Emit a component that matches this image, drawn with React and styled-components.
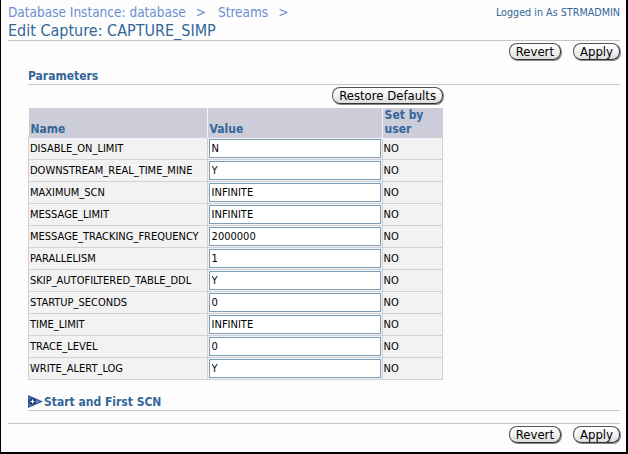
import React from "react";
import styled, { createGlobalStyle } from "styled-components";

const Global = createGlobalStyle`
  html, body { margin: 0; padding: 0; background: #ffffff; }
  body { font-family: "DejaVu Sans", "Liberation Sans", sans-serif; }
  * { box-sizing: border-box; }
`;

const Frame = styled.div`
  width: 628px;
  height: 454px;
  border-left: 1px solid #000;
  border-right: 2px solid #000;
  border-bottom: 2px solid #000;
  background: #fdfdfd;
  padding: 0 6px 0 7px;
  display: flex;
  flex-direction: column;
  font-family: "DejaVu Sans", "Liberation Sans", sans-serif;
  font-stretch: condensed;
`;

const TopRow = styled.div`
  display: flex;
  justify-content: space-between;
  align-items: flex-start;
  height: 22px;
  padding-top: 4px;
`;

const Breadcrumb = styled.div`
  font-size: 13.5px;
  color: #6b8ed1;
  display: flex;
  span.sep { margin: 0 12px 0 10px; }
`;

const Logged = styled.div`
  font-size: 10.7px;
  color: #336699;
  padding-top: 2px;
`;

const Title = styled.h1`
  margin: 0;
  font-size: 16px;
  font-weight: normal;
  color: #336699;
  height: 18px;
  line-height: 18px;
`;

const Divider = styled.div`
  height: 1px;
  background: #c4c4d0;
  margin: ${(p) => p.$m || "0"};
`;

const ButtonBar = styled.div`
  display: flex;
  justify-content: flex-end;
  gap: 12px;
  padding: ${(p) => p.$pad || "2px 0 0 0"};
`;

const PillButton = styled.button`
  font-family: inherit;
  font-stretch: condensed;
  font-size: 13px;
  color: #000;
  height: 17px;
  padding: 0 6px;
  border: 1px solid #555;
  border-right-color: #333;
  border-bottom-color: #333;
  border-radius: 8px;
  background: linear-gradient(#ffffff, #eeeeee 60%, #dcdcdc);
  box-shadow: 1px 1px 0 #888;
  line-height: 15px;
  cursor: pointer;
`;

const Section = styled.div`
  padding-left: 20px;
`;

const SectionHeader = styled.div`
  font-size: 12px;
  font-weight: bold;
  color: #336699;
  border-bottom: 1px solid #c4c4d0;
  height: ${(p) => p.$h || "18px"};
  display: flex;
  align-items: flex-end;
  padding-bottom: 1px;
  gap: 1px;
`;

const TableBox = styled.div`
  width: 415px;
  display: flex;
  flex-direction: column;
`;

const RestoreRow = styled.div`
  display: flex;
  justify-content: flex-end;
  padding: 2px 0 4px 0;
`;

const Table = styled.table`
  border-collapse: collapse;
  width: 415px;
  font-size: 11px;
`;

const Th = styled.th`
  background: #cdcdd9;
  color: #336699;
  font-weight: bold;
  font-size: 12px;
  text-align: left;
  vertical-align: bottom;
  padding: 0 2px 1px 2px;
  height: 29px;
  width: ${(p) => p.$w};
  border-right: 1px solid #f4f4f4;
  line-height: 14px;
  &:last-child { border-right: none; }
`;

const Td = styled.td`
  background: #f2f2f2;
  border: 1px solid #cfd0da;
  padding: 0 1px;
  height: 22px;
  color: #000;
  white-space: nowrap;
`;

const ValueInput = styled.input`
  font-family: inherit;
  font-stretch: condensed;
  font-size: 11px;
  width: 172px;
  height: 19px;
  border: 1px solid #7f9db9;
  background: #fff;
  padding: 0 2px;
  margin: 0;
  display: block;
`;

const Disclosure = styled.svg`
  display: block;
  margin-bottom: 1px;
`;

const params = [
  ["DISABLE_ON_LIMIT", "N"],
  ["DOWNSTREAM_REAL_TIME_MINE", "Y"],
  ["MAXIMUM_SCN", "INFINITE"],
  ["MESSAGE_LIMIT", "INFINITE"],
  ["MESSAGE_TRACKING_FREQUENCY", "2000000"],
  ["PARALLELISM", "1"],
  ["SKIP_AUTOFILTERED_TABLE_DDL", "Y"],
  ["STARTUP_SECONDS", "0"],
  ["TIME_LIMIT", "INFINITE"],
  ["TRACE_LEVEL", "0"],
  ["WRITE_ALERT_LOG", "Y"],
];

export default function App() {
  return (
    <>
      <Global />
      <Frame>
        <TopRow>
          <Breadcrumb>
            <span>Database Instance: database</span>
            <span className="sep">&gt;</span>
            <span>Streams</span>
            <span className="sep">&gt;</span>
          </Breadcrumb>
          <Logged>Logged in As STRMADMIN</Logged>
        </TopRow>
        <Title>Edit Capture: CAPTURE_SIMP</Title>
        <Divider />
        <ButtonBar $pad="2px 0 0 0">
          <PillButton>Revert</PillButton>
          <PillButton>Apply</PillButton>
        </ButtonBar>
        <Section>
          <SectionHeader $h="25px">Parameters</SectionHeader>
          <TableBox>
            <RestoreRow>
              <PillButton>Restore Defaults</PillButton>
            </RestoreRow>
            <Table>
              <thead>
                <tr>
                  <Th $w="179px">Name</Th>
                  <Th $w="174px">Value</Th>
                  <Th $w="62px">Set by<br />user</Th>
                </tr>
              </thead>
              <tbody>
                {params.map(([name, value]) => (
                  <tr key={name}>
                    <Td>{name}</Td>
                    <Td><ValueInput defaultValue={value} /></Td>
                    <Td>NO</Td>
                  </tr>
                ))}
              </tbody>
            </Table>
          </TableBox>
          <SectionHeader $h="31px">
            <Disclosure width="15" height="13" viewBox="0 0 15 13">
              <polygon points="0,0 15,6.5 0,13" fill="#3a5f96" />
              <polygon points="1,2 12,6.5 1,11" fill="#5b83c0" />
              <circle cx="4.5" cy="6.5" r="3.5" fill="#1f3f78" />
              <path d="M2.5 6.5h4M4.5 4.5v4" stroke="#fff" strokeWidth="1.2" />
            </Disclosure>
            Start and First SCN
          </SectionHeader>
        </Section>
        <Divider $m="12px 0 0 0" />
        <ButtonBar $pad="2px 0 0 0">
          <PillButton>Revert</PillButton>
          <PillButton>Apply</PillButton>
        </ButtonBar>
      </Frame>
    </>
  );
}
